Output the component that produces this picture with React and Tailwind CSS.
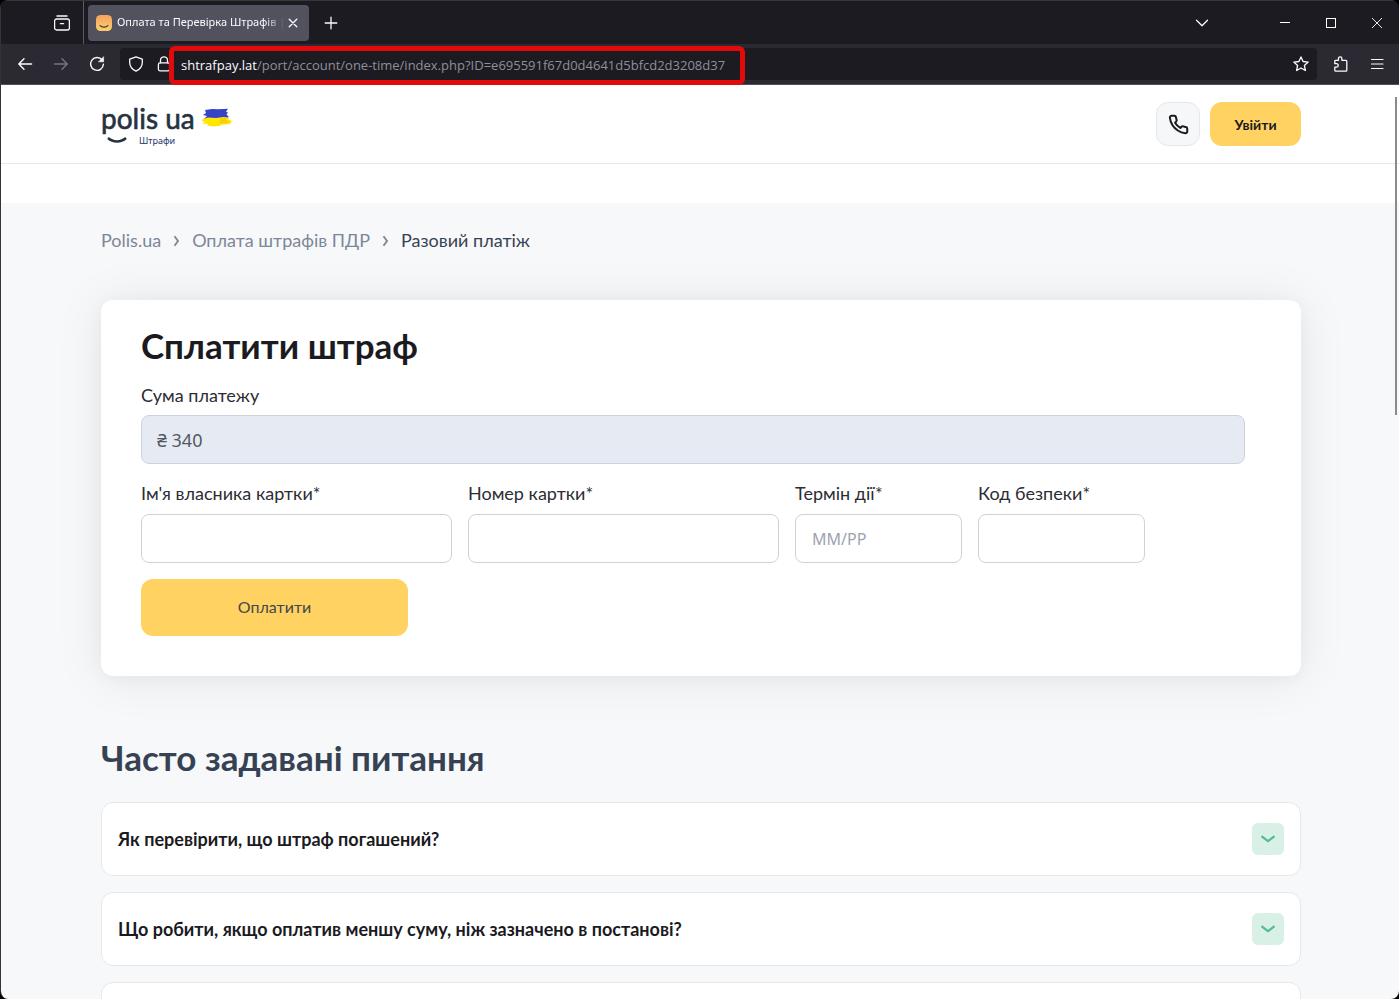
import React from "react";

const FAQ = [
  "Як перевірити, що штраф погашений?",
  "Що робити, якщо оплатив меншу суму, ніж зазначено в постанові?",
  "",
];

function ToolIcon({ children, size = 16, className = "" }) {
  return (
    <svg
      width={size}
      height={size}
      viewBox="0 0 16 16"
      fill="none"
      stroke="currentColor"
      strokeWidth="1.3"
      strokeLinecap="round"
      strokeLinejoin="round"
      className={className}
      aria-hidden="true"
    >
      {children}
    </svg>
  );
}

function TabStrip() {
  return (
    <div className="flex h-[44px] shrink-0 items-center border-t border-[#38383a] bg-[#1c1b22] text-[#fbfbfe]">
      <button type="button" aria-label="Firefox View" className="flex h-full w-[83px] items-center justify-end border-r border-[#5b5b66] pr-[13px]">
        <ToolIcon size={16}>
          <path d="M3 1h10" strokeWidth="1.4" />
          <path d="M2.600 4h10.800a2 2 0 0 1 2 2v7a2 2 0 0 1-2 2H2.600a2 2 0 0 1-2-2V6a2 2 0 0 1 2-2z" />
          <path d="M6.400 8.700h3.200" />
        </ToolIcon>
      </button>
      <div className="ml-1 flex h-9 w-[221px] items-center rounded bg-[#52525e] px-2">
        <svg width="16" height="16" viewBox="0 0 16 16" className="shrink-0" aria-hidden="true">
          <defs>
            <linearGradient id="fav" x1="0" y1="0" x2="0" y2="1">
              <stop offset="0" stopColor="#f4a261" />
              <stop offset="1" stopColor="#fccf6a" />
            </linearGradient>
          </defs>
          <rect width="16" height="16" rx="4.5" fill="url(#fav)" />
          <path d="M4 10.6c2 2 6 2 8 0" fill="none" stroke="#3a3333" strokeWidth="1.1" strokeLinecap="round" />
        </svg>
        <span className="ml-[5px] min-w-0 flex-1 overflow-hidden whitespace-nowrap font-['Noto_Sans','Open_Sans',sans-serif] text-[11px] [mask-image:linear-gradient(to_right,black_88%,transparent)]">
          Оплата та Перевірка Штрафів |
        </span>
        <button type="button" aria-label="Закрити вкладку" className="flex h-4 w-4 shrink-0 items-center justify-center">
          <ToolIcon size={10}>
            <path d="M2 2l12 12M14 2L2 14" strokeWidth="2.200" />
          </ToolIcon>
        </button>
      </div>
      <button type="button" aria-label="Нова вкладка" className="ml-[14px]">
        <ToolIcon size={16}>
          <path d="M8 2.2v11.6M2.2 8h11.6" />
        </ToolIcon>
      </button>
      <div className="ml-auto flex h-full items-center">
        <button type="button" aria-label="Список вкладок" className="flex h-full w-[46px] items-center justify-center">
          <ToolIcon size={16}>
            <path d="M2.500 5.200L8 10.700l5.500-5.500" />
          </ToolIcon>
        </button>
        <button type="button" aria-label="Згорнути" className="ml-[37px] flex h-full w-[46px] items-center justify-center">
          <svg width="10" height="10" aria-hidden="true"><path d="M0 4.5h10" stroke="#fff" /></svg>
        </button>
        <button type="button" aria-label="Розгорнути" className="flex h-full w-[46px] items-center justify-center">
          <svg width="10" height="10" aria-hidden="true"><rect x=".5" y=".5" width="9" height="9" fill="none" stroke="#fff" /></svg>
        </button>
        <button type="button" aria-label="Закрити" className="flex h-full w-[45px] items-center justify-center">
          <svg width="10" height="10" aria-hidden="true"><path d="M0 0l10 10M10 0L0 10" stroke="#fff" strokeWidth=".9" /></svg>
        </button>
      </div>
    </div>
  );
}

function AddressBar() {
  return (
    <div className="flex h-[41px] shrink-0 items-center border-b border-[#55505f] bg-[#2b2a33] pr-[14px] text-[#fbfbfe]">
      <button type="button" aria-label="Назад" className="ml-4">
        <ToolIcon><path d="M14.6 8H1.8M7 2.8L1.8 8 7 13.2" strokeWidth="1.4" /></ToolIcon>
      </button>
      <button type="button" aria-label="Вперед" className="ml-5 text-[#77767e]">
        <ToolIcon><path d="M1.4 8h12.8M9 2.8L14.2 8 9 13.2" strokeWidth="1.4" /></ToolIcon>
      </button>
      <button type="button" aria-label="Оновити" className="ml-5">
        <ToolIcon>
          <path d="M13.2 4.2A6.4 6.4 0 1 0 14.4 8.3" strokeWidth="1.4" />
          <path d="M14.6 1v4.8H9.8z" fill="currentColor" strokeWidth=".6" />
        </ToolIcon>
      </button>
      <div className="ml-[15px] flex h-8 min-w-0 flex-1 items-center rounded bg-[#1c1b22] px-2">
        <ToolIcon className="shrink-0">
          <path d="M8 .9l6.3 2.3v3.3c0 4-2.6 7-6.3 8.7-3.700-1.700-6.300-4.700-6.300-8.700V3.200z" />
        </ToolIcon>
        <ToolIcon className="ml-3 shrink-0">
          <rect x="2.400" y="6.800" width="11.200" height="8" rx="1.600" />
          <path d="M4.500 6.800V4.300a3.500 3.500 0 0 1 7 0v2.500" />
        </ToolIcon>
        <div className="relative ml-[9px] whitespace-nowrap pt-[2px] font-['Open_Sans','Noto_Sans',sans-serif] text-[13px] leading-5">
          <span role="textbox" aria-label="Адреса сторінки" aria-readonly="true" className="text-[#8f8f98]">
            <span className="text-[#fbfbfe]">shtrafpay.lat</span>/port/account/one-time/index.php?ID=e695591f67d0d4641d5bfcd2d3208d37
          </span>
          <div className="pointer-events-none absolute -bottom-[10px] -left-3 -right-5 -top-[7px] z-10 rounded-md border-[5px] border-[#e20a0a]" />
        </div>
        <button type="button" aria-label="Додати закладку" className="ml-auto">
          <ToolIcon>
            <path d="M8 .9l2.100 4.600 5.100.6-3.800 3.400 1 5L8 12l-4.400 2.500 1-5L.8 6.100l5.100-.6z" />
          </ToolIcon>
        </button>
      </div>
      <button type="button" aria-label="Розширення" className="ml-4">
        <ToolIcon>
          <path d="M5.400 4.300V2.700a1.700 1.700 0 0 1 3.500 0v1.600h4a.9.900 0 0 1 .9.900v9a.9.900 0 0 1-.9.900H2.700a.9.900 0 0 1-.9-.9v-3h1.700a1.700 1.700 0 0 0 0-3.500H1.800V5.200a.9.900 0 0 1 .9-.9z" />
        </ToolIcon>
      </button>
      <button type="button" aria-label="Меню" className="ml-5">
        <ToolIcon><path d="M2.500 3.500h11.500M2.500 8h11.500M2.500 12.500h11.500" strokeWidth="1.200" /></ToolIcon>
      </button>
    </div>
  );
}

function Logo() {
  return (
    <a href="#" className="flex items-start gap-[6px] text-[#26323f]">
      <span className="flex flex-col">
        <span className="text-[28px] leading-7 [-webkit-text-stroke:0.6px]">polis ua</span>
        <span className="mt-1 flex items-start gap-3">
          <svg width="26" height="9" viewBox="0 0 26 9" aria-hidden="true">
            <path d="M7 2c5 4.600 13 4.600 18 0" fill="none" stroke="currentColor" strokeWidth="2.400" />
          </svg>
          <span className="font-['Noto_Sans','Open_Sans',sans-serif] text-[9px] leading-[9px] text-[#1d3566]">Штрафи</span>
        </span>
      </span>
      <svg width="31" height="20" viewBox="0 0 31 20" aria-hidden="true" className="mt-1">
        <path d="M4 2l7-1 6 .3L27 .8l-2 3 2 1-1.500 1.700 2 2-.5 2.500H3l3-3-4-1 3-2z" fill="#3443c8" />
        <path d="M1 11.500l6-2 8 .5 7-1 6 .5-1 2 4 1.500-2 3-10 .8 1 1-8 .7-6-1 1-1.500-6-.5 3-1.500-3-1z" fill="#ffe600" />
        <path d="M19 10l7-.5-1 2 3 1.500-1 2-8 .5z" fill="#f2c60c" opacity=".7" />
      </svg>
    </a>
  );
}

function Header() {
  return (
    <header className="flex items-center justify-between border-b border-[#e8e8ec] bg-white py-[17px] pl-[100px] pr-[98px]">
      <Logo />
      <div className="flex items-center gap-[10px]">
        <button type="button" aria-label="Зателефонувати" className="flex h-11 w-11 items-center justify-center rounded-xl border border-[#e6e7eb] bg-[#f6f7f9] text-[#1b1b1f]">
          <svg width="21" height="21" viewBox="0 0 24 24" fill="none" stroke="currentColor" strokeWidth="2.300" strokeLinejoin="round" aria-hidden="true">
            <path d="M22 16.920v3a2 2 0 0 1-2.180 2 19.790 19.790 0 0 1-8.630-3.070 19.500 19.500 0 0 1-6-6 19.790 19.790 0 0 1-3.070-8.670A2 2 0 0 1 4.110 2h3a2 2 0 0 1 2 1.720c.127.960.361 1.903.7 2.810a2 2 0 0 1-.45 2.110L8.090 9.910a16 16 0 0 0 6 6l1.270-1.270a2 2 0 0 1 2.110-.45c.907.339 1.850.573 2.810.7A2 2 0 0 1 22 16.920z" />
          </svg>
        </button>
        <button type="button" className="h-11 min-w-[91px] rounded-xl bg-[#ffd262] px-6 text-[14px] font-bold text-[#1b1b1f]">Увійти</button>
      </div>
    </header>
  );
}

function Field({ id, label, placeholder, className }) {
  return (
    <div className={className}>
      <label htmlFor={id} className="block text-[18px] leading-6">{label}</label>
      <input
        id={id}
        type="text"
        placeholder={placeholder}
        className="mt-[9px] block h-[49px] w-full rounded-lg border border-[#d1d1db] bg-white px-4 font-['Noto_Sans',sans-serif] text-[16px] placeholder:text-[#9ca3af]"
      />
    </div>
  );
}

function PaymentCard() {
  return (
    <form
      onSubmit={(e) => e.preventDefault()}
      className="rounded-xl bg-white px-10 pb-10 pt-[23px] text-[#2b2d33] shadow-[0_2px_50px_rgba(0,0,0,0.08),0_2px_16px_rgba(0,0,0,0.04)]"
    >
      <h1 className="text-[35px] font-bold leading-[44px] text-[#1b1b1f]">Сплатити штраф</h1>
      <label htmlFor="sum" className="mt-4 block text-[18px] leading-6">Сума платежу</label>
      <input
        id="sum"
        type="text"
        readOnly
        value="₴ 340"
        className="mt-2 block h-[49px] w-[calc(100%-16px)] rounded-lg border border-[#cdd3dc] bg-[#e6ebf3] px-[15px] font-['Noto_Sans',sans-serif] text-[18px] text-[#555a61]"
      />
      <div className="mt-[17px] flex max-w-[1004px] gap-4">
        <Field id="owner" label="Ім'я власника картки*" className="w-[311px]" />
        <Field id="number" label="Номер картки*" className="w-[311px]" />
        <Field id="term" label="Термін дії*" placeholder="ММ/РР" className="w-[167px]" />
        <Field id="code" label="Код безпеки*" className="w-[167px]" />
      </div>
      <button type="submit" className="mt-4 h-[57px] w-[267px] rounded-xl bg-[#ffd262] pb-[2px] text-[16px] text-[#40474f]">Оплатити</button>
    </form>
  );
}

function Faq() {
  return (
    <section className="mt-[57px]">
      <h2 className="text-[35px] font-bold leading-[48px] text-[#364254]">Часто задавані питання</h2>
      <div className="mt-[21px] flex flex-col gap-4">
        {FAQ.map((q, i) => (
          <button
            key={i}
            type="button"
            aria-expanded="false"
            className="flex h-[74px] items-center justify-between rounded-xl border border-[#e6e7ea] bg-white px-4 text-left text-[18px] font-bold text-[#1b1b1f]"
          >
            <span>{q}</span>
            <span className="flex h-8 w-8 items-center justify-center rounded-md bg-[#d9f0e6] text-[#52bd94]">
              <svg width="14" height="8" viewBox="0 0 14 8" aria-hidden="true">
                <path d="M.5 1.200L7 6.200l6.500-5" fill="none" stroke="currentColor" strokeWidth="2.200" />
              </svg>
            </span>
          </button>
        ))}
      </div>
    </section>
  );
}

function Crumb() {
  return (
    <svg width="7" height="12" viewBox="0 0 7 12" aria-hidden="true" className="mt-[2px]">
      <path d="M1.500 1.200L5 6l-3.500 4.800" fill="none" stroke="currentColor" strokeWidth="1.900" />
    </svg>
  );
}

export default function App() {
  return (
    <div className="h-screen bg-black">
      <div className="flex h-full flex-col overflow-hidden rounded-lg border-l border-[#33333a] font-['Lato','Noto_Sans',sans-serif]">
        <TabStrip />
        <AddressBar />
        <div className="relative min-h-0 flex-1 overflow-hidden bg-[#f7f8fa]">
          <Header />
          <div className="h-[39px] bg-white" />
          <main className="pl-[100px] pr-[98px] pt-[25px]">
            <nav aria-label="Навігація" className="flex items-center gap-3 text-[18px] leading-6 text-[#7c8797]">
              <a href="#">Polis.ua</a>
              <Crumb />
              <a href="#">Оплата штрафів ПДР</a>
              <Crumb />
              <span className="text-[#364254]">Разовий платіж</span>
            </nav>
            <div className="mt-12">
              <PaymentCard />
            </div>
            <Faq />
          </main>
          <div className="absolute right-[2px] top-3 h-[318px] w-[2px] bg-[#8a8a8a]" />
        </div>
      </div>
    </div>
  );
}
